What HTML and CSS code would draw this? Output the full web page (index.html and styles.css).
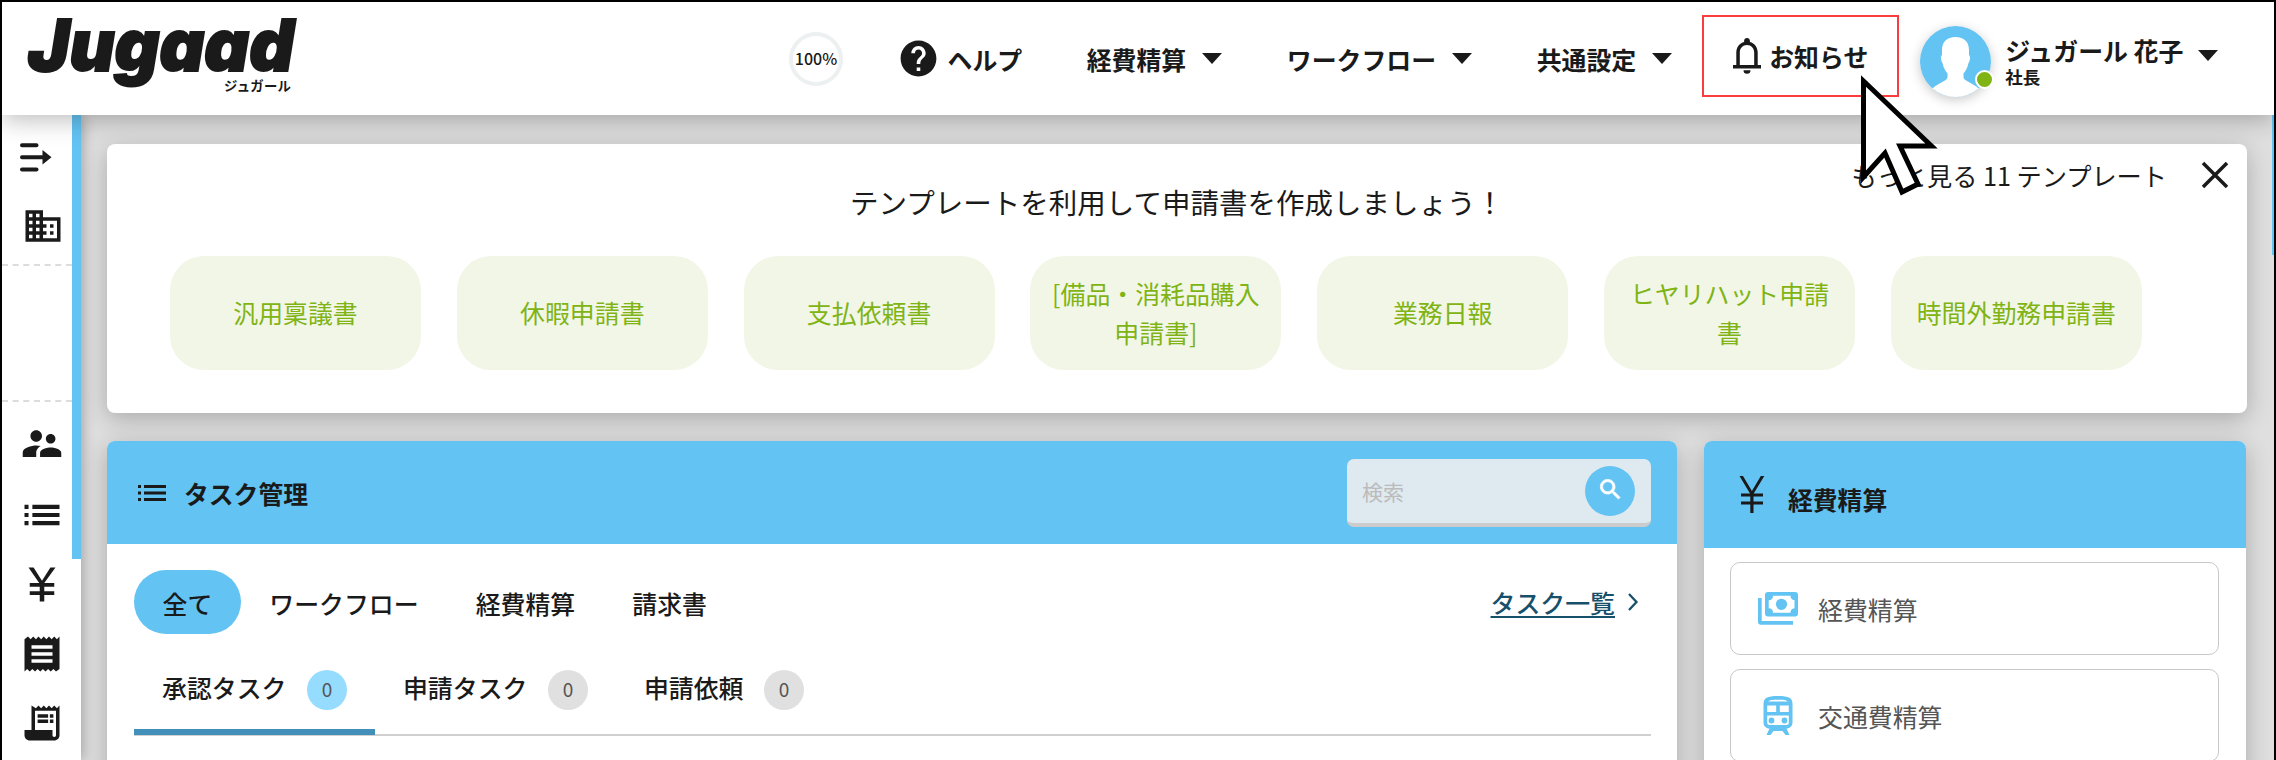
FILE: index.html
```html
<!DOCTYPE html>
<html lang="ja">
<head>
    <meta charset="UTF-8">
    <meta name="viewport" content="width=device-width, initial-scale=1.0">
    <title>Jugaad</title>
    <link rel="stylesheet" href="styles.css">
</head>
<body>
    <div class="page">
        <header class="header">
            <div class="logo">
                <svg width="300" height="112" viewBox="0 0 300 112">
                    <text class="logo-name" x="26" y="68.500" textLength="266" lengthAdjust="spacingAndGlyphs">Jugaad</text>
                    <text class="logo-kana" x="222" y="88.500" textLength="67">ジュガール</text>
                </svg>
            </div>
            <nav class="nav">
                <div class="progress">100%</div>
                <a class="nav-item help">
                    <svg width="43" height="43" viewBox="0 0 24 24"><path d="M12 2C6.48 2 2 6.48 2 12s4.480 10 10 10 10-4.480 10-10S17.520 2 12 2zm1 17h-2v-2h2v2zm2.070-7.750-.9.920C13.450 12.900 13 13.500 13 15h-2v-.5c0-1.100.450-2.100 1.170-2.830l1.240-1.260c.370-.360.590-.860.590-1.410 0-1.100-.9-2-2-2s-2 .9-2 2H8c0-2.210 1.790-4 4-4s4 1.790 4 4c0 .880-.360 1.680-.930 2.250z"/></svg>
                    <span>ヘルプ</span>
                </a>
                <a class="nav-item"><span>経費精算</span><i class="caret"></i></a>
                <a class="nav-item"><span>ワークフロー</span><i class="caret"></i></a>
                <a class="nav-item"><span>共通設定</span><i class="caret"></i></a>
            </nav>
            <a class="notice">
                <svg width="30" height="36" viewBox="0 0 30 36"><path d="M15 0c-1.700 0-2.900 1.200-2.900 2.800v1.100C7.300 5.200 4.300 9.400 4.300 14.400V27H1v3.500h28V27h-3.300V14.400c0-5-3-9.200-7.800-10.500V2.800C17.900 1.200 16.700 0 15 0zm0 7c4.200 0 7.200 3.300 7.200 7.500V27H7.800V14.500C7.800 10.300 10.800 7 15 7zM11.500 32.200a3.500 3.500 0 0 0 7 0z"/></svg>
                <span>お知らせ</span>
            </a>
            <div class="user">
                <div class="avatar">
                    <svg width="71" height="71" viewBox="0 0 71 71">
                        <circle cx="35.500" cy="35.500" r="35.500" fill="#63c3f2"/>
                        <path fill="#fff" d="M35.500 11C27 11 22 16 22 24v5c-1.500 1-1.500 5 .5 8 1 5 3 8 5 10.500v4C27 55 18 57 12.500 62.500a35.500 35.500 0 0 0 46 0C53 57 44 55 43.500 51.500v-4c2-2.500 4-5.500 5-10.500 2-3 2-7 .5-8v-5c0-8-5-13-13.500-13z"/>
                    </svg>
                    <i class="status"></i>
                </div>
                <div class="user-info">
                    <div class="user-name">ジュガール 花子</div>
                    <div class="user-role">社長</div>
                </div>
                <i class="caret"></i>
            </div>
        </header>

        <div class="body">
            <aside class="sidebar">
                <div class="side-group side-top">
                    <svg class="toggle" width="34" height="30" viewBox="0 0 34 30"><path d="M3 3.200h14.500M3 15.200h22M3 27.500h14.500" stroke="#1a1a1a" stroke-width="4" stroke-linecap="round" fill="none"/><path d="M23.500 8v14.400l9-7.200z"/></svg>
                    <svg class="building" width="42" height="42" viewBox="0 0 24 24"><path d="M12 7V3H2v18h20V7H12zM6 19H4v-2h2v2zm0-4H4v-2h2v2zm0-4H4V9h2v2zm0-4H4V5h2v2zm4 12H8v-2h2v2zm0-4H8v-2h2v2zm0-4H8V9h2v2zm0-4H8V5h2v2zm10 12h-8v-2h2v-2h-2v-2h2v-2h-2V9h8v10zm-2-8h-2v2h2v-2zm0 4h-2v2h2v-2z"/></svg>
                </div>
                <div class="side-group side-empty"></div>
                <div class="side-group side-menu">
                    <svg width="42" height="42" viewBox="0 0 24 24"><g transform="translate(-1.200 -2) scale(1.100)"><path d="M16.500 12c1.380 0 2.490-1.120 2.490-2.500S17.880 7 16.500 7 14 8.120 14 9.500s1.120 2.500 2.500 2.500zM9 11c1.660 0 2.990-1.340 2.990-3S10.660 5 9 5 6 6.340 6 8s1.340 3 3 3zm7.500 3c-1.830 0-5.500.920-5.500 2.750V19h11v-2.250c0-1.830-3.670-2.750-5.500-2.750zM9 13c-2.330 0-7 1.170-7 3.500V19h7v-2.250c0-.850.330-2.340 2.370-3.470C10.500 13.100 9.660 13 9 13z"/></g></svg>
                    <svg width="42" height="42" viewBox="0 0 24 24"><path d="M2 13.200h2.300v-2.400H2v2.400zm0 4.600h2.300v-2.400H2v2.400zm0-9.200h2.300V6.200H2v2.400zm4.500 4.600H22v-2.400H6.500v2.400zm0 4.600H22v-2.400H6.500v2.400zm0-11.600v2.400H22V6.200H6.500z"/></svg>
                    <svg width="42" height="42" viewBox="0 0 24 24"><path d="M13.300 11.400H19v2.200h-5.700v2.500H19v2.200h-5.700V22h-2.600v-3.700H5v-2.200h5.700v-2.500H5v-2.200h5.400L4.300 2.600h2.900L12 10.200l4.800-7.600h2.900z"/></svg>
                    <svg width="42" height="42" viewBox="0 0 24 24"><path d="M18 17H6v-2h12v2zm0-4H6v-2h12v2zm0-4H6V7h12v2zM2 22l1.500-1.500L5 22l1.500-1.500L8 22l1.500-1.500L11 22l1.500-1.500L14 22l1.500-1.500L17 22l1.500-1.500L20 22l2-1.500V2l-1.500 1.500L19 2l-1.500 1.500L16 2l-1.500 1.500L13 2l-1.500 1.500L10 2 8.500 3.500 7 2 5.500 3.500 4 2 2 3.500z"/></svg>
                    <svg width="42" height="42" viewBox="0 0 24 24"><path d="M20.500 3.500 19 2l-1.500 1.500L16 2l-1.500 1.500L13 2l-1.500 1.500L10 2 8.500 3.500 6 2v14H2v3c0 1.660 1.340 3 3 3h14c1.660 0 3-1.340 3-3V2l-1.500 1.500zM20 19c0 .550-.450 1-1 1s-1-.450-1-1v-3H8V5h12v14z"/><path d="M9.500 7h6v2h-6zM16.500 7h2v2h-2zM9.500 10h6v2h-6zM16.500 10h2v2h-2z"/></svg>
                </div>
            </aside>

            <main class="main">
                <section class="card templates">
                    <div class="templates-title">テンプレートを利用して申請書を作成しましょう！</div>
                    <div class="templates-more">
                        <span>もっと見る 11 テンプレート</span>
                        <svg width="28" height="28" viewBox="0 0 28 28"><path d="M2 2l24 24M26 2L2 26" stroke="#1a1a1a" stroke-width="3.500" fill="none"/></svg>
                    </div>
                    <div class="template-list">
                        <a class="template">汎用稟議書</a>
                        <a class="template">休暇申請書</a>
                        <a class="template">支払依頼書</a>
                        <a class="template">[備品・消耗品購入申請書]</a>
                        <a class="template">業務日報</a>
                        <a class="template">ヒヤリハット申請書</a>
                        <a class="template">時間外勤務申請書</a>
                    </div>
                </section>

                <div class="columns">
                    <section class="card tasks">
                        <div class="tasks-header">
                            <svg width="28" height="18" viewBox="0 0 28 18"><path d="M0 1h3v3H0zM0 7.500h3v3H0zM0 14h3v3H0zM6 1h22v3H6zM6 7.500h22v3H6zM6 14h22v3H6z"/></svg>
                            <h2>タスク管理</h2>
                            <div class="search">
                                <span>検索</span>
                                <button class="search-button">
                                    <svg width="27" height="27" viewBox="0 0 24 24"><path fill="#fff" stroke="#fff" stroke-width=".7" d="M15.500 14h-.790l-.280-.270C15.410 12.590 16 11.110 16 9.500 16 5.910 13.090 3 9.500 3S3 5.910 3 9.500 5.910 16 9.500 16c1.610 0 3.090-.590 4.230-1.570l.270.280v.790l5 4.990L20.490 19l-4.990-5zm-6 0C7.010 14 5 11.990 5 9.500S7.010 5 9.500 5 14 7.010 14 9.500 11.990 14 9.500 14z"/></svg>
                                </button>
                            </div>
                        </div>
                        <div class="filters">
                            <a class="filter active">全て</a>
                            <a class="filter">ワークフロー</a>
                            <a class="filter">経費精算</a>
                            <a class="filter">請求書</a>
                            <a class="all-tasks">
                                <span>タスク一覧</span>
                                <svg width="12" height="18" viewBox="0 0 12 18"><path d="M2 1l7.500 8L2 17" stroke="#17506b" stroke-width="2.300" fill="none"/></svg>
                            </a>
                        </div>
                        <div class="tabs">
                            <a class="tab active">承認タスク<span class="count">0</span></a>
                            <a class="tab">申請タスク<span class="count">0</span></a>
                            <a class="tab">申請依頼<span class="count">0</span></a>
                        </div>
                    </section>

                    <section class="card expenses">
                        <div class="expenses-header">
                            <svg width="26" height="37" viewBox="0 0 26 37"><path d="M14.700 17.500H24v3h-9.500v5H24v3h-9.500V37h-3.200v-8.500H2v-3h9.300v-5H2v-3h9L.5 0H4l8.900 15L21.800 0h3.500z"/></svg>
                            <h2>経費精算</h2>
                        </div>
                        <a class="expense">
                            <svg width="40" height="33" viewBox="0 0 40 33"><path fill="#63c3f2" fill-rule="evenodd" d="M10 0h27a3 3 0 0 1 3 3v18.500a3 3 0 0 1-3 3H10a3 3 0 0 1-3-3V3a3 3 0 0 1 3-3zm5 3.700a4.500 4.500 0 0 1-4.300 4.500v8.100a4.500 4.500 0 0 1 4.300 4.500h17.500a4.500 4.500 0 0 1 4-4.500V8.200a4.500 4.500 0 0 1-4-4.500z"/><circle cx="23.500" cy="12.300" r="5.600" fill="#63c3f2"/><path fill="#63c3f2" d="M0 6h3.700v23H35v3.700H3a3 3 0 0 1-3-3z"/></svg>
                            <span>経費精算</span>
                        </a>
                        <a class="expense">
                            <svg width="40" height="40" viewBox="0 0 40 40"><path fill="#63c3f2" fill-rule="evenodd" d="M20 0C9 0 5.500 2 5.500 8v18.500c0 3.500 2.500 6 6 6L8.500 39h4l3-4h9l3 4h4l-3-6.500c3.500 0 6-2.500 6-6V8c0-6-3.500-8-14.500-8zm0 3.700c5.500 0 8.500.3 9.800 1.800H10.200C11.500 4 14.500 3.700 20 3.700zM9.200 9.500h9V16h-9zm12.600 0h9V16h-9zM9.200 19.500h21.600v7a2.500 2.500 0 0 1-2.500 2.500H11.700a2.500 2.500 0 0 1-2.500-2.500z"/><circle cx="13.500" cy="24.500" r="2.900" fill="#63c3f2"/><circle cx="26.500" cy="24.500" r="2.900" fill="#63c3f2"/></svg>
                            <span>交通費精算</span>
                        </a>
                    </section>
                </div>
            </main>
            <i class="scroll-mark"></i>
        </div>

        <!-- mouse pointer over the notice link -->
        <svg class="pointer" width="90" height="130" viewBox="0 0 90 130"><path d="M13.500 11v96L35 83l17 39 16-8-18-38h31.500z" fill="#fff" stroke="#000" stroke-width="5"/></svg>
    </div>
</body>
</html>
```

FILE: styles.css
```css
* {
    box-sizing: border-box;
}

body {
    margin: 0;
    font-family: "Noto Sans CJK JP", "Noto Sans", sans-serif;
    font-size: 24.9px;
    line-height: 36px;
    color: #1a1a1a;
}

svg {
    display: block;
    flex-shrink: 0;
    fill: #1a1a1a;
}

h2 {
    margin: 0;
    font-size: 24.8px;
    font-weight: bold;
}

.page {
    position: relative;
    display: flex;
    flex-direction: column;
    width: 2276px;
    height: 760px;
    overflow: hidden;
    border: 2px solid #000;
    border-bottom: none;
    background: #dfdfdf;
}

/* header */
.header {
    position: relative;
    z-index: 2;
    display: flex;
    flex-shrink: 0;
    height: 113px;
    background: #fff;
    box-shadow: 0 4px 24px rgba(0, 0, 0, 0.28);
}

.logo {
    width: 787px;
}

.logo svg {
    overflow: visible;
}

.logo-name {
    font-family: Inter, sans-serif;
    font-size: 72px;
    font-weight: 900;
    font-style: italic;
    font-feature-settings: "cv11";
    stroke: #1a1a1a;
    stroke-width: 2;
}

.logo-kana {
    font-size: 13.4px;
    font-weight: bold;
}

.nav {
    display: flex;
    align-items: center;
    gap: 64.500px;
    height: 113px;
    font-weight: bold;
}

.progress {
    width: 54px;
    height: 54px;
    border: 4px solid #ecf0f1;
    border-radius: 50%;
    font-size: 16px;
    font-weight: 500;
    line-height: 44px;
    text-align: center;
}

.nav-item {
    display: flex;
    align-items: center;
    gap: 16px;
}

.help {
    gap: 8px;
    margin-left: -11px;
}

.caret {
    border: 10px solid transparent;
    border-top: 11px solid #1a1a1a;
    border-bottom: none;
}

.notice {
    display: flex;
    align-items: center;
    gap: 7px;
    width: 197px;
    height: 82px;
    margin: 13px 0 0 30px;
    padding-left: 28px;
    border: 2px solid #fb3d3d;
    font-weight: bold;
}

.user {
    display: flex;
    height: 72px;
    margin: 24px 0 0 21px;
    font-weight: bold;
}

.avatar {
    position: relative;
    width: 71px;
    height: 71px;
    border-radius: 50%;
    box-shadow: 0 3px 12px rgba(0, 0, 0, 0.22);
}

.status {
    position: absolute;
    right: -3px;
    bottom: 8px;
    width: 19px;
    height: 19px;
    border: 2px solid #fff;
    border-radius: 50%;
    background: #7fb414;
}

.user-info {
    width: 193px;
    padding: 6px 0 0 14px;
    white-space: nowrap;
}

.user-name {
    line-height: 36px;
}

.user-role {
    font-size: 17.5px;
    line-height: 18px;
}

.user .caret {
    height: 11px;
    margin: 24px 0 0 14px;
}

/* layout */
.body {
    display: flex;
    flex: 1;
    min-height: 0;
}

.sidebar {
    position: relative;
    z-index: 1;
    width: 79px;
    background: linear-gradient(#63c3f2, #63c3f2) 70px 0 / 9px 444px no-repeat #fff;
    box-shadow: 2px 0 12px rgba(0, 0, 0, 0.28);
}

.side-group {
    width: 70px;
}

.side-top {
    height: 151px;
    padding-top: 27px;
    border-bottom: 2px dashed #dcdcdc;
}

.toggle {
    margin-left: 17px;
}

.building {
    margin: 33px 0 0 20px;
}

.side-empty {
    height: 136px;
    border-bottom: 2px dashed #dcdcdc;
}

.side-menu {
    display: flex;
    flex-direction: column;
    gap: 27.5px;
    padding: 22px 0 0 19px;
}

.main {
    width: 2140px;
    margin: 29px 0 0 26px;
}

.card {
    border-radius: 8px;
    background: #fff;
    box-shadow: 0 6px 24px rgba(0, 0, 0, 0.24);
}

.scroll-mark {
    width: 2px;
    height: 140px;
    margin-left: auto;
    background: #63c3f2;
}

/* templates */
.templates {
    position: relative;
    height: 269px;
    padding-top: 40px;
}

.templates-title {
    font-size: 28.5px;
    text-align: center;
}

.templates-more {
    position: absolute;
    top: 13px;
    right: 18px;
    display: flex;
    align-items: center;
    gap: 34px;
    font-size: 25.200px;
}

.template-list {
    display: flex;
    gap: 35.800px;
    padding: 36px 0 0 63px;
}

.template {
    display: flex;
    align-items: center;
    justify-content: center;
    width: 251px;
    height: 114px;
    padding: 0 20px;
    border-radius: 34px;
    background: #f2f6e7;
    color: #7fb414;
    line-height: 39.3px;
    text-align: center;
}

/* tasks */
.columns {
    display: flex;
    gap: 27px;
    margin-top: 28px;
}

.tasks {
    width: 1570px;
    height: 400px;
}

.tasks-header {
    display: flex;
    align-items: center;
    height: 103px;
    padding: 0 26px 0 31px;
    border-radius: 8px 8px 0 0;
    background: #63c3f2;
}

.tasks-header h2 {
    margin-left: 18px;
}

.search {
    display: flex;
    align-items: center;
    justify-content: space-between;
    width: 304px;
    height: 68px;
    margin-left: auto;
    padding: 0 16px 0 15px;
    border-bottom: 4px solid #ccc;
    border-radius: 7px;
    background: #dfeaf0;
    color: #bbb;
    font-size: 21px;
}

.search-button {
    display: flex;
    align-items: center;
    justify-content: center;
    width: 50px;
    height: 50px;
    padding: 0 0 3px;
    border: none;
    border-radius: 50%;
    background: #63c3f2;
}

.filters {
    display: flex;
    align-items: center;
    height: 64px;
    margin: 26px 38px 0 27px;
    font-weight: 500;
}

.filter {
    height: 64px;
    padding: 0 28.500px;
    border-radius: 32px;
    line-height: 66px;
}

.filter.active {
    background: #63c3f2;
}

.all-tasks {
    display: flex;
    align-items: center;
    gap: 12px;
    margin-left: auto;
    color: #17506b;
}

.all-tasks span {
    text-decoration: underline;
    text-underline-offset: 3px;
}

.tabs {
    display: flex;
    height: 102px;
    margin: 0 26px 0 27px;
    border-bottom: 2px solid #d0d0d0;
    font-weight: 500;
}

.tab {
    display: flex;
    align-items: center;
    height: 101px;
    padding: 11px 28px 0;
    border-bottom: 6px solid transparent;
}

.tab.active {
    border-bottom-color: #4290b9;
}

.count {
    width: 40px;
    height: 40px;
    margin: 6px 0 0 20.500px;
    border-radius: 50%;
    background: #e0e0e0;
    color: #555;
    font-size: 19px;
    font-weight: normal;
    line-height: 38px;
    text-align: center;
}

.tab.active .count {
    background: #96dcff;
}

/* expenses */
.expenses {
    width: 542px;
    height: 400px;
}

.expenses-header {
    display: flex;
    align-items: center;
    gap: 23px;
    height: 107px;
    padding-left: 35px;
    border-radius: 8px 8px 0 0;
    background: #63c3f2;
}

.expenses-header h2 {
    margin-top: 8px;
}

.expense {
    display: flex;
    align-items: center;
    gap: 20px;
    height: 93px;
    margin: 14px 27px 0 26px;
    padding-left: 27px;
    border: 1.5px solid #c8c8c8;
    border-radius: 10px;
    color: #555;
}

/* pointer */
.pointer {
    position: absolute;
    z-index: 3;
    top: 68px;
    left: 1848px;
}
```
